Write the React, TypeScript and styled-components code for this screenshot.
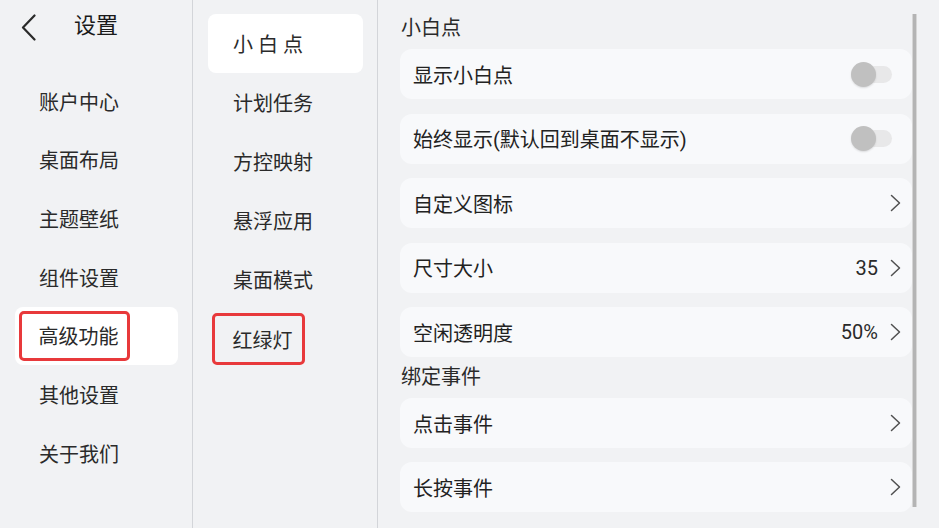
import React from "react";
import styled, { createGlobalStyle } from "styled-components";

const Global = createGlobalStyle`
  html, body { margin: 0; padding: 0; }
  body {
    font-family: Roboto, "Noto Sans CJK SC", sans-serif;
    background: #f1f2f4;
    color: #222;
  }
  * { box-sizing: border-box; }
`;

const Screen = styled.div`
  width: 939px;
  height: 528px;
  display: flex;
  background: #f1f2f4;
  overflow: hidden;
`;

const NavPanel = styled.div`
  width: 193px;
  flex: none;
  border-right: 1px solid #d3d5d9;
  display: flex;
  flex-direction: column;
`;

const Header = styled.div`
  height: 55px;
  display: flex;
  align-items: center;
  padding: 0 0 0 21px;
  margin-bottom: 17px;
`;

const Title = styled.div`
  font-size: 22px;
  line-height: 1;
  color: #1a1a1a;
  margin: 0 0 3px 38px;
`;

const NavItem = styled.div<{ $active?: boolean }>`
  height: 58.67px;
  margin: 0 14px 0 15px;
  border-radius: 8px;
  background: ${(p) => (p.$active ? "#ffffff" : "transparent")};
  display: flex;
  align-items: center;
  padding-left: ${(p) => (p.$active ? "4px" : "24px")};
  font-size: 20px;
  color: #2a2a2a;
`;

const Marked = styled.span<{ $padR: number }>`
  display: inline-flex;
  align-items: center;
  height: 50px;
  border: 3.5px solid #e8393b;
  border-radius: 5px;
  padding: 0 ${(p) => p.$padR}px 0 16.5px;
`;

const SubPanel = styled.div`
  width: 185px;
  flex: none;
  border-right: 1px solid #d3d5d9;
  padding-top: 14px;
  display: flex;
  flex-direction: column;
`;

const SubItem = styled.div<{ $active?: boolean; $marked?: boolean }>`
  height: 59px;
  margin: 0 14px 0 15px;
  border-radius: 8px;
  background: ${(p) => (p.$active ? "#ffffff" : "transparent")};
  display: flex;
  align-items: center;
  padding-left: ${(p) => (p.$marked ? "4px" : "25px")};
  font-size: 20px;
  color: #2a2a2a;
  letter-spacing: ${(p) => (p.$active ? "5px" : "0")};
`;

const SubMarked = styled(Marked)`
  height: 52px;
  margin-top: 1px;
  padding-left: 17.5px;
`;

const DetailPanel = styled.div`
  flex: 1;
  display: flex;
  padding: 14px 22px 0 22px;
`;

const Content = styled.div`
  flex: 1;
  display: flex;
  flex-direction: column;
`;

const ScrollThumb = styled.div`
  width: 5px;
  flex: none;
  margin: 0 0 21px 0;
  background: #b4b4b4;
  border-left: 1px solid #d6d6d6;
  border-right: 1px solid #d6d6d6;
`;

const SectionLabel = styled.div<{ $top?: number }>`
  height: 28px;
  line-height: 28px;
  font-size: 20px;
  color: #2a2a2a;
  padding-left: 1px;
  margin: ${(p) => p.$top ?? 0}px 0 7px 0;
`;

const Card = styled.div<{ $gapBefore?: number }>`
  height: 50px;
  flex: none;
  margin-top: ${(p) => p.$gapBefore ?? 0}px;
  border-radius: 12px;
  background: #f8f9fb;
  display: flex;
  align-items: center;
  padding: 0 11px 0 13px;
  font-size: 20px;
  color: #222;
`;

const Label = styled.div`
  flex: 1;
`;

const Value = styled.span`
  font-size: 20px;
  color: #2a2a2a;
  margin-right: 12px;
`;

const Toggle = styled.span`
  position: relative;
  width: 41px;
  height: 25px;
  margin-right: 9px;
  flex: none;
`;

const Track = styled.span`
  position: absolute;
  right: 0;
  top: 4px;
  width: 37px;
  height: 17px;
  border-radius: 9px;
  background: #e8e8e9;
`;

const Knob = styled.span`
  position: absolute;
  left: 0;
  top: 0;
  width: 25px;
  height: 25px;
  border-radius: 50%;
  background: #c0c0c0;
  box-shadow: 0 1px 2px rgba(0, 0, 0, 0.12);
`;

const Chevron = () => (
  <svg width="11" height="18" viewBox="0 0 11 18" fill="none">
    <path d="M1.5 1.5 L9.5 9 L1.5 16.5" stroke="#505050" strokeWidth="1.5" strokeLinecap="round" strokeLinejoin="round" />
  </svg>
);

const BackIcon = () => (
  <svg width="15" height="27" viewBox="0 0 15 27" fill="none">
    <path d="M13.5 1.5 L2 13.5 L13.5 25.5" stroke="#2a2a2a" strokeWidth="2.2" strokeLinecap="round" strokeLinejoin="round" />
  </svg>
);

type Row = { label: string; kind: "toggle" | "link"; value?: string };

const Switch = () => (
  <Toggle>
    <Track />
    <Knob />
  </Toggle>
);

const SettingRow = ({ row, gap }: { row: Row; gap: number }) => (
  <Card $gapBefore={gap}>
    <Label>{row.label}</Label>
    {row.kind === "toggle" ? (
      <Switch />
    ) : (
      <>
        {row.value && <Value>{row.value}</Value>}
        <Chevron />
      </>
    )}
  </Card>
);

const navItems = ["账户中心", "桌面布局", "主题壁纸", "组件设置", "高级功能", "其他设置", "关于我们"];
const subItems = ["小白点", "计划任务", "方控映射", "悬浮应用", "桌面模式", "红绿灯"];

const section1: Row[] = [
  { label: "显示小白点", kind: "toggle" },
  { label: "始终显示(默认回到桌面不显示)", kind: "toggle" },
  { label: "自定义图标", kind: "link" },
  { label: "尺寸大小", kind: "link", value: "35" },
  { label: "空闲透明度", kind: "link", value: "50%" },
];

const section2: Row[] = [
  { label: "点击事件", kind: "link" },
  { label: "长按事件", kind: "link" },
];

export default function App() {
  return (
    <>
      <Global />
      <Screen>
        <NavPanel>
          <Header>
            <BackIcon />
            <Title>设置</Title>
          </Header>
          {navItems.map((t) =>
            t === "高级功能" ? (
              <NavItem key={t} $active>
                <Marked $padR={8}>{t}</Marked>
              </NavItem>
            ) : (
              <NavItem key={t}>{t}</NavItem>
            )
          )}
        </NavPanel>
        <SubPanel>
          {subItems.map((t, i) =>
            t === "红绿灯" ? (
              <SubItem key={t} $marked>
                <SubMarked $padR={9}>{t}</SubMarked>
              </SubItem>
            ) : (
              <SubItem key={t} $active={i === 0}>
                {t}
              </SubItem>
            )
          )}
        </SubPanel>
        <DetailPanel>
          <Content>
            <SectionLabel>小白点</SectionLabel>
            {section1.map((r, i) => (
              <SettingRow key={r.label} row={r} gap={i === 0 ? 0 : 14.5} />
            ))}
            <SectionLabel $top={6}>绑定事件</SectionLabel>
            {section2.map((r, i) => (
              <SettingRow key={r.label} row={r} gap={i === 0 ? 0 : 14} />
            ))}
          </Content>
          <ScrollThumb />
        </DetailPanel>
      </Screen>
    </>
  );
}
